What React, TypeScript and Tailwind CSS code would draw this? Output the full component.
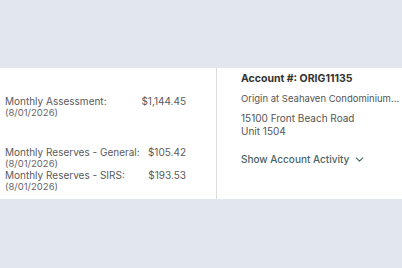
import React from 'react';
import { ChevronDown } from 'lucide-react';

const charges = [
  { id: 1, label: 'Monthly Assessment:', date: '(8/01/2026)', amount: '$1,144.45', gap: '' },
  { id: 2, label: 'Monthly Reserves - General:', date: '(8/01/2026)', amount: '$105.42', gap: 'mt-[28px]' },
  { id: 3, label: 'Monthly Reserves - SIRS:', date: '(8/01/2026)', amount: '$193.53', gap: 'mt-[0px]' },
];

const App: React.FC = () => {
  return (
    <div className="w-[402px] h-[268px] bg-[#e2e6ee] overflow-hidden font-['Inter',sans-serif]">
      <div className="h-[68px]" />
      <div className="h-[131px] bg-white flex">
        <div className="w-[217px] border-r border-[#dcdcdc] pl-[5px] pr-[30px] pt-[27px]">
          {charges.map((c) => (
            <div key={c.id} className={`flex justify-between ${c.gap}`}>
              <div className="whitespace-nowrap">
                <div className="text-[10px] leading-[12px] text-[#5a5a5a]">{c.label}</div>
                <div className="text-[9.5px] leading-[11px] text-[#666]">{c.date}</div>
              </div>
              <div className="text-[10px] leading-[12px] text-[#5a5a5a]">{c.amount}</div>
            </div>
          ))}
        </div>
        <div className="flex-1 pl-[24px] pt-[4px] min-w-0">
          <div className="text-[10.5px] leading-[14px] font-bold text-[#333]">Account #: ORIG11135</div>
          <div className="mt-[6px] text-[9.5px] leading-[14px] text-[#555] whitespace-nowrap">
            Origin at Seahaven Condominium...
          </div>
          <div className="mt-[6px] text-[10px] leading-[13px] text-[#555]">15100 Front Beach Road</div>
          <div className="text-[10px] leading-[13px] text-[#555]">Unit 1504</div>
          <div className="mt-[14px] flex items-center gap-[4px] text-[10px] leading-[14px] text-[#4b6464] font-medium">
            Show Account Activity
            <ChevronDown size={13} strokeWidth={2} />
          </div>
        </div>
      </div>
    </div>
  );
};

export default App;
